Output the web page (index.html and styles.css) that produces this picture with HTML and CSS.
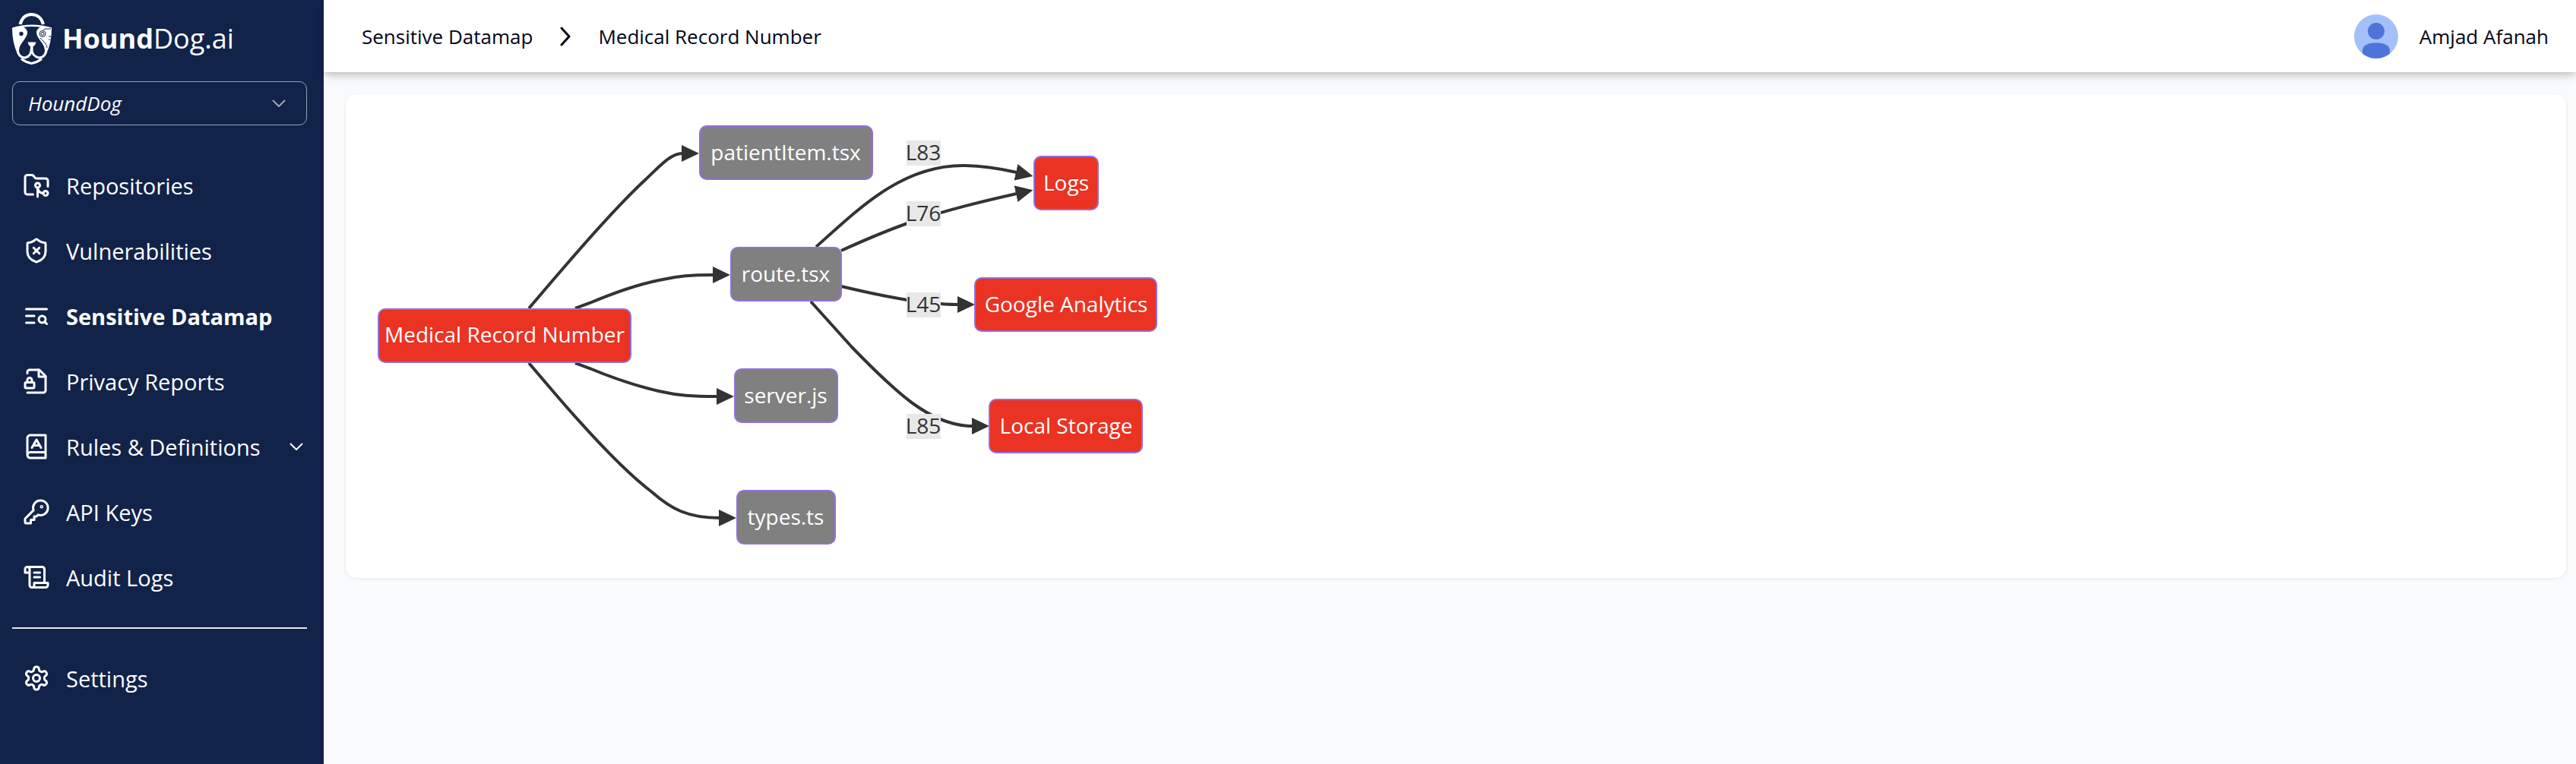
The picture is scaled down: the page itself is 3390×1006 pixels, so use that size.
FILE: index.html
```
<!DOCTYPE html>
<html lang="en">
<head>
  <meta charset="utf-8">
  <title>HoundDog.ai - Sensitive Datamap</title>
  <link rel="stylesheet" href="styles.css">
</head>
<body>

<div class="app">
  <aside class="sidebar">
    <a class="logo" href="#">
      <svg class="logo-mark" viewBox="0 0 52 68" fill="none" stroke="#fff">
        <path d="M10.500 15C13 6 19 2 25.500 2S38.500 6 41 15" stroke-width="4"/>
        <path d="M0 19.500Q26 11.500 52 19.500V22Q26 14 0 22Z" fill="#fff" stroke="none"/>
        <path d="M0 20L14 18Q20 21 20 26C20 33 9 41 9 49L7 54Q0 39 0 20Z" fill="#fff" stroke="none"/>
        <path d="M52 20L38 18Q32 21 32 26C32 33 43 41 43 49L45 54Q52 39 52 20Z" fill="#fff" stroke="none"/>
        <path d="M8 46C6 54 11 59 17 59C22 58 25.500 54 25.500 46C25.500 54 30 58 35 59C41 59 46 54 44 46" stroke-width="3"/>
        <path d="M20.500 38.500H31.500Q31 42 27.500 44.500V49H24V44.500Q21 42 20.500 38.500Z" fill="#fff" stroke="none"/>
        <path d="M12 60.500Q18 65 25.500 66.500Q33 65 39 60.500" stroke-width="3"/>
        <circle cx="12" cy="27.500" r="2.700" fill="#12234a" stroke="none"/>
        <circle cx="40" cy="27.500" r="4" stroke="#12234a" stroke-width="1"/>
        <circle cx="40" cy="27.500" r="2" stroke="#12234a" stroke-width="1"/>
        <path d="M41 23L43 21H51M48 31H51M48 35H50M37 33C40 37 45 39 46 46" stroke="#12234a" stroke-width="1"/>
      </svg>
      <span class="logo-text"><b>Hound</b>Dog.ai</span>
    </a>

    <div class="org">
      <select class="org-select" aria-label="Organization">
        <option>HoundDog</option>
      </select>
      <svg class="org-arrow chevron" viewBox="0 0 18 10"><path d="M1 1L9 9L17 1"/></svg>
    </div>

    <nav class="menu">
      <a class="menu-item" href="#">
        <svg class="icon" viewBox="0 0 24 24"><path d="M9 20H4a2 2 0 0 1-2-2V5a2 2 0 0 1 2-2h3.900a2 2 0 0 1 1.690.9l.81 1.200a2 2 0 0 0 1.670.9H20a2 2 0 0 1 2 2v5"/><circle cx="13" cy="12" r="2"/><path d="M18 19c-2.800 0-5-2.200-5-5v8"/><circle cx="20" cy="19" r="2"/></svg>
        <span>Repositories</span>
      </a>
      <a class="menu-item" href="#">
        <svg class="icon" viewBox="0 0 24 24"><path d="M20 13c0 5-3.500 7.500-7.660 8.950a1 1 0 0 1-.67-.01C7.500 20.500 4 18 4 13V6a1 1 0 0 1 1-1c2 0 4.500-1.200 6.240-2.720a1.170 1.170 0 0 1 1.520 0C14.510 3.810 17 5 19 5a1 1 0 0 1 1 1z"/><path d="m14.500 9.500-5 5M9.500 9.500l5 5"/></svg>
        <span>Vulnerabilities</span>
      </a>
      <a class="menu-item active" href="#">
        <svg class="icon" viewBox="0 0 24 24"><path d="M21 6H3M10 12H3M10 18H3"/><circle cx="17" cy="15" r="3"/><path d="m21 19-1.900-1.900"/></svg>
        <span>Sensitive Datamap</span>
      </a>
      <a class="menu-item" href="#">
        <svg class="icon" viewBox="0 0 24 24"><path d="M4 5V4a2 2 0 0 1 2-2h8.500L20 7.500V20a2 2 0 0 1-2 2H4"/><path d="M14 2v6h6"/><rect x="2" y="13" width="8" height="5" rx="1"/><path d="M8 13v-2a2 2 0 1 0-4 0v2"/></svg>
        <span>Privacy Reports</span>
      </a>
      <a class="menu-item" href="#">
        <svg class="icon" viewBox="0 0 24 24"><path d="M4 19.500v-15A2.500 2.500 0 0 1 6.500 2H20v20H6.500a2.500 2.500 0 0 1 0-5H20"/><path d="m8 13 4-7 4 7M9.100 11h5.700"/></svg>
        <span>Rules &amp; Definitions</span>
        <svg class="chevron menu-arrow" viewBox="0 0 18 10"><path d="M1 1L9 9L17 1"/></svg>
      </a>
      <a class="menu-item" href="#">
        <svg class="icon" viewBox="0 0 24 24"><path d="M2 18v3c0 .6.4 1 1 1h4v-3h3v-3h2l1.400-1.400a6.500 6.500 0 1 0-4-4Z"/><circle cx="16.500" cy="7.500" r=".5"/></svg>
        <span>API Keys</span>
      </a>
      <a class="menu-item" href="#">
        <svg class="icon" viewBox="0 0 24 24"><path d="M8 21h12a2 2 0 0 0 2-2v-2H10v2a2 2 0 1 1-4 0V5a2 2 0 1 0-4 0v3h4"/><path d="M19 17V5a2 2 0 0 0-2-2H4M15 8h-5M15 12h-5"/></svg>
        <span>Audit Logs</span>
      </a>
    </nav>

    <hr class="divider">

    <a class="menu-item" href="#">
      <svg class="icon" viewBox="0 0 24 24"><path d="M12.220 2h-.44a2 2 0 0 0-2 2v.18a2 2 0 0 1-1 1.730l-.43.25a2 2 0 0 1-2 0l-.15-.08a2 2 0 0 0-2.730.73l-.22.38a2 2 0 0 0 .73 2.730l.15.1a2 2 0 0 1 1 1.720v.51a2 2 0 0 1-1 1.740l-.15.09a2 2 0 0 0-.73 2.730l.22.38a2 2 0 0 0 2.730.73l.15-.08a2 2 0 0 1 2 0l.43.25a2 2 0 0 1 1 1.730V20a2 2 0 0 0 2 2h.44a2 2 0 0 0 2-2v-.18a2 2 0 0 1 1-1.730l.43-.25a2 2 0 0 1 2 0l.15.08a2 2 0 0 0 2.730-.73l.22-.39a2 2 0 0 0-.73-2.730l-.15-.08a2 2 0 0 1-1-1.740v-.5a2 2 0 0 1 1-1.740l.15-.09a2 2 0 0 0 .73-2.730l-.22-.38a2 2 0 0 0-2.730-.73l-.15.08a2 2 0 0 1-2 0l-.43-.25a2 2 0 0 1-1-1.730V4a2 2 0 0 0-2-2z"/><circle cx="12" cy="12" r="3"/></svg>
      <span>Settings</span>
    </a>
  </aside>

  <div class="page">
    <header class="topbar">
      <div class="crumbs">
        <a href="#">Sensitive Datamap</a>
        <svg class="crumb-arrow" viewBox="0 0 16 26"><path d="M3 2L13 13L3 24"/></svg>
        <span>Medical Record Number</span>
      </div>
      <div class="user">
        <svg class="avatar" viewBox="0 0 58 58">
          <clipPath id="round"><circle cx="29" cy="29" r="29"/></clipPath>
          <g clip-path="url(#round)">
            <path fill="#a4c0fb" d="M0 0H58V58H0Z"/>
            <circle cx="29" cy="22" r="11" fill="#4f74d9"/>
            <path fill="#4f74d9" d="M11 58V47C11 34 47 34 47 47V58Z"/>
          </g>
        </svg>
        <span>Amjad Afanah</span>
      </div>
    </header>

    <main class="card">
      <svg class="graph" width="1060" height="589" viewBox="0 0 1060 589">
        <defs>
          <marker id="arrow" markerUnits="userSpaceOnUse" markerWidth="24" markerHeight="22" refX="1" refY="11" orient="auto">
            <path d="M0 0L23 11L0 22Z" fill="#333"/>
          </marker>
        </defs>

        <g class="edges">
          <path d="M215 258L244 224C273 190 332 122 369 88C388 70 402 54 417 54"/>
          <path d="M276 258L295 251C314 243 352 228 386 221C412 215 430 214 458 214"/>
          <path d="M276 330L295 337C314 345 352 359 386 367C412 373 430 374 463 374"/>
          <path d="M215 330L244 364C273 398 332 466 377 500C402 522 424 534 466 534"/>
          <path d="M593 177C650 126 706 70 786 70C810 70 835 74 857 79"/>
          <path d="M626 182C690 153 735 134 857 107"/>
          <path d="M626 229C668 239 730 253 780 253"/>
          <path d="M586 249L640 309C700 371 745 413 799 413"/>
        </g>

        <g class="edge-label">
          <rect x="712" y="37" width="45" height="33"/><text x="734" y="63">L83</text>
          <rect x="712" y="117" width="45" height="33"/><text x="734" y="143">L76</text>
          <rect x="712" y="237" width="45" height="33"/><text x="734" y="263">L45</text>
          <rect x="712" y="397" width="45" height="33"/><text x="734" y="423">L85</text>
        </g>

        <g class="node data">
          <rect x="17" y="259" width="332" height="70" rx="9"/><text x="183" y="303">Medical Record Number</text>
          <rect x="880" y="58" width="84" height="70" rx="9"/><text x="922" y="103">Logs</text>
          <rect x="802" y="218" width="239" height="70" rx="9"/><text x="922" y="263">Google Analytics</text>
          <rect x="821" y="378" width="201" height="70" rx="9"/><text x="922" y="423">Local Storage</text>
        </g>

        <g class="node file">
          <rect x="440" y="18" width="227" height="70" rx="9"/><text x="553" y="63">patientItem.tsx</text>
          <rect x="481" y="178" width="145" height="70" rx="9"/><text x="553" y="223">route.tsx</text>
          <rect x="486" y="338" width="135" height="70" rx="9"/><text x="553" y="383">server.js</text>
          <rect x="489" y="498" width="129" height="70" rx="9"/><text x="553" y="543">types.ts</text>
        </g>
      </svg>
    </main>
  </div>
</div>

</body>
</html>
```
FILE: styles.css
```
*{
box-sizing: border-box;
}
body{
margin: 0;
background-color: #f8fafc;
color: #020617;
font-family: "Open Sans", "Noto Sans", sans-serif;
font-size: 26px;
}
a{
color: inherit;
text-decoration: none;
}
.app{
display: flex;
min-height: 100vh;
}

/* sidebar */
.sidebar{
flex: none;
width: 426px;
padding: 16px 22px 0 16px;
background-color: #12234a;
color: white;
}
.logo{
display: flex;
align-items: center;
gap: 14px;
height: 70px;
}
.logo-mark{
width: 52px;
height: 68px;
}
.logo-text{
font-size: 36px;
line-height: 68px;
}
.org{
position: relative;
margin: 21px 0 36px;
}
.org-select{
display: block;
width: 100%;
height: 58px;
padding: 0 20px;
appearance: none;
background: none;
border: 1px solid #94a3b8;
border-radius: 10px;
color: white;
font-family: inherit;
font-size: 26px;
font-style: italic;
font-weight: 500;
}
.org-arrow{
position: absolute;
right: 28px;
top: 24px;
opacity: 0.6;
}
.chevron{
width: 18px;
height: 10px;
fill: none;
stroke: white;
stroke-width: 2;
}
.menu-item{
display: flex;
align-items: center;
gap: 21px;
height: 86px;
padding: 0 5px 0 14px;
font-size: 29px;
font-weight: 500;
}
.menu-item.active{
font-weight: bold;
}
.icon{
width: 36px;
height: 36px;
fill: none;
stroke: white;
stroke-width: 2;
stroke-linecap: round;
stroke-linejoin: round;
}
.menu-arrow{
margin-left: auto;
}
.divider{
height: 2px;
margin: 23px 0 22px;
border: 0;
background-color: #e2e8f0;
}

/* top bar */
.page{
flex: 1;
min-width: 0;
}
.topbar{
display: flex;
align-items: center;
justify-content: space-between;
height: 95px;
padding: 0 36px 0 50px;
background-color: white;
box-shadow: 0 8px 12px -2px rgba(0,0,0,0.14), 0 2px 6px rgba(0,0,0,0.12);
font-weight: 500;
}
.crumbs{
display: flex;
align-items: center;
gap: 35px;
}
.crumb-arrow{
width: 16px;
height: 26px;
fill: none;
stroke: #020617;
stroke-width: 3;
stroke-linecap: round;
stroke-linejoin: round;
}
.user{
display: flex;
align-items: center;
gap: 28px;
}
.avatar{
width: 58px;
height: 58px;
}

/* datamap */
.card{
margin: 29px 13px 0 29px;
padding: 24px 26px;
background-color: white;
border-radius: 14px;
box-shadow: 0 1px 4px rgba(0,0,0,0.08);
}
.graph{
display: block;
}
.graph text{
font-size: 28px;
font-weight: 500;
text-anchor: middle;
}
.edges path{
fill: none;
stroke: #333;
stroke-width: 4;
marker-end: url(#arrow);
}
.edge-label rect{
fill: #e8e8e8;
}
.edge-label text{
fill: #333;
}
.node rect{
stroke: #9370db;
stroke-width: 2;
}
.node text{
fill: white;
}
.data rect{
fill: #ea3323;
}
.file rect{
fill: #808080;
}
```
